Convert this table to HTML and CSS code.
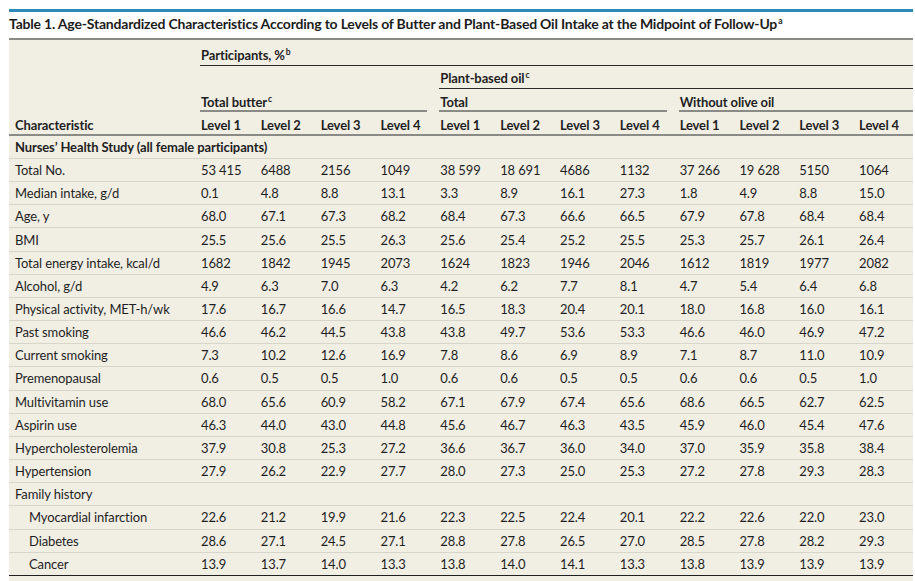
FILE: index.html
```html
<!DOCTYPE html>
<html lang="en">
<head>
<meta charset="utf-8">
<title>Table 1</title>
<link rel="stylesheet" href="styles.css">
</head>
<body>
<div class="page">
  <div class="rule"></div>
  <h1 class="title">Table 1. Age-Standardized Characteristics According to Levels of Butter and Plant-Based Oil Intake at the Midpoint of Follow-Up<sup>a</sup></h1>
  <div class="tablewrap">
    <table class="data">
      <colgroup>
        <col class="c-char">
        <col class="c-num"><col class="c-num"><col class="c-num"><col class="c-num">
        <col class="c-num"><col class="c-num"><col class="c-num"><col class="c-num">
        <col class="c-num"><col class="c-num"><col class="c-num"><col class="c-num">
      </colgroup>
      <thead>
        <tr class="h1">
          <th class="charhead" rowspan="4"><div class="charlbl">Characteristic</div></th>
          <th class="grp last" colspan="12"><div class="lbl lbl-dark"><span>Participants, %<sup>b</sup></span></div></th>
        </tr>
        <tr class="h2">
          <th class="blank" colspan="4"></th>
          <th class="grp last" colspan="8"><div class="lbl lbl-dark"><span>Plant-based oil<sup>c</sup></span></div></th>
        </tr>
        <tr class="h3">
          <th class="grp" colspan="4"><div class="lbl lbl-gray"><span>Total butter<sup>c</sup></span></div></th>
          <th class="grp" colspan="4"><div class="lbl lbl-gray"><span>Total</span></div></th>
          <th class="grp last" colspan="4"><div class="lbl lbl-gray"><span>Without olive oil</span></div></th>
        </tr>
        <tr class="h4">
          <th class="lev">Level 1</th><th class="lev">Level 2</th><th class="lev">Level 3</th><th class="lev">Level 4</th>
          <th class="lev">Level 1</th><th class="lev">Level 2</th><th class="lev">Level 3</th><th class="lev">Level 4</th>
          <th class="lev">Level 1</th><th class="lev">Level 2</th><th class="lev">Level 3</th><th class="lev">Level 4</th>
        </tr>
      </thead>
      <tbody>
        <tr class="section"><td colspan="13">Nurses’ Health Study (all female participants)</td></tr>
        <tr><td>Total No.</td><td>53&nbsp;415</td><td>6488</td><td>2156</td><td>1049</td><td>38&nbsp;599</td><td>18&nbsp;691</td><td>4686</td><td>1132</td><td>37&nbsp;266</td><td>19&nbsp;628</td><td>5150</td><td>1064</td></tr>
        <tr><td>Median intake, g/d</td><td>0.1</td><td>4.8</td><td>8.8</td><td>13.1</td><td>3.3</td><td>8.9</td><td>16.1</td><td>27.3</td><td>1.8</td><td>4.9</td><td>8.8</td><td>15.0</td></tr>
        <tr><td>Age, y</td><td>68.0</td><td>67.1</td><td>67.3</td><td>68.2</td><td>68.4</td><td>67.3</td><td>66.6</td><td>66.5</td><td>67.9</td><td>67.8</td><td>68.4</td><td>68.4</td></tr>
        <tr><td>BMI</td><td>25.5</td><td>25.6</td><td>25.5</td><td>26.3</td><td>25.6</td><td>25.4</td><td>25.2</td><td>25.5</td><td>25.3</td><td>25.7</td><td>26.1</td><td>26.4</td></tr>
        <tr><td>Total energy intake, kcal/d</td><td>1682</td><td>1842</td><td>1945</td><td>2073</td><td>1624</td><td>1823</td><td>1946</td><td>2046</td><td>1612</td><td>1819</td><td>1977</td><td>2082</td></tr>
        <tr><td>Alcohol, g/d</td><td>4.9</td><td>6.3</td><td>7.0</td><td>6.3</td><td>4.2</td><td>6.2</td><td>7.7</td><td>8.1</td><td>4.7</td><td>5.4</td><td>6.4</td><td>6.8</td></tr>
        <tr><td>Physical activity, MET-h/wk</td><td>17.6</td><td>16.7</td><td>16.6</td><td>14.7</td><td>16.5</td><td>18.3</td><td>20.4</td><td>20.1</td><td>18.0</td><td>16.8</td><td>16.0</td><td>16.1</td></tr>
        <tr><td>Past smoking</td><td>46.6</td><td>46.2</td><td>44.5</td><td>43.8</td><td>43.8</td><td>49.7</td><td>53.6</td><td>53.3</td><td>46.6</td><td>46.0</td><td>46.9</td><td>47.2</td></tr>
        <tr><td>Current smoking</td><td>7.3</td><td>10.2</td><td>12.6</td><td>16.9</td><td>7.8</td><td>8.6</td><td>6.9</td><td>8.9</td><td>7.1</td><td>8.7</td><td>11.0</td><td>10.9</td></tr>
        <tr><td>Premenopausal</td><td>0.6</td><td>0.5</td><td>0.5</td><td>1.0</td><td>0.6</td><td>0.6</td><td>0.5</td><td>0.5</td><td>0.6</td><td>0.6</td><td>0.5</td><td>1.0</td></tr>
        <tr><td>Multivitamin use</td><td>68.0</td><td>65.6</td><td>60.9</td><td>58.2</td><td>67.1</td><td>67.9</td><td>67.4</td><td>65.6</td><td>68.6</td><td>66.5</td><td>62.7</td><td>62.5</td></tr>
        <tr><td>Aspirin use</td><td>46.3</td><td>44.0</td><td>43.0</td><td>44.8</td><td>45.6</td><td>46.7</td><td>46.3</td><td>43.5</td><td>45.9</td><td>46.0</td><td>45.4</td><td>47.6</td></tr>
        <tr><td>Hypercholesterolemia</td><td>37.9</td><td>30.8</td><td>25.3</td><td>27.2</td><td>36.6</td><td>36.7</td><td>36.0</td><td>34.0</td><td>37.0</td><td>35.9</td><td>35.8</td><td>38.4</td></tr>
        <tr><td>Hypertension</td><td>27.9</td><td>26.2</td><td>22.9</td><td>27.7</td><td>28.0</td><td>27.3</td><td>25.0</td><td>25.3</td><td>27.2</td><td>27.8</td><td>29.3</td><td>28.3</td></tr>
        <tr><td colspan="13">Family history</td></tr>
        <tr class="sub"><td>Myocardial infarction</td><td>22.6</td><td>21.2</td><td>19.9</td><td>21.6</td><td>22.3</td><td>22.5</td><td>22.4</td><td>20.1</td><td>22.2</td><td>22.6</td><td>22.0</td><td>23.0</td></tr>
        <tr class="sub"><td>Diabetes</td><td>28.6</td><td>27.1</td><td>24.5</td><td>27.1</td><td>28.8</td><td>27.8</td><td>26.5</td><td>27.0</td><td>28.5</td><td>27.8</td><td>28.2</td><td>29.3</td></tr>
        <tr class="sub lastrow"><td>Cancer</td><td>13.9</td><td>13.7</td><td>14.0</td><td>13.3</td><td>13.8</td><td>14.0</td><td>14.1</td><td>13.3</td><td>13.8</td><td>13.9</td><td>13.9</td><td>13.9</td></tr>
      </tbody>
    </table>
  </div>
</div>
</body>
</html>
```

FILE: styles.css
```css
html, body {
  margin: 0;
  padding: 0;
  background: #ffffff;
}

.page {
  padding: 9px 2px 0 9px;
  width: 904px;
  font-family: "Lato", "Open Sans", sans-serif;
  color: #1f1f1f;
}

.rule {
  height: 3px;
  background: #2c8bb9;
}

.title {
  margin: 0 0 2px 0;
  font-size: 14px;
  line-height: 24px;
  font-weight: 700;
  letter-spacing: -0.2px;
  color: #1c1c1c;
  white-space: nowrap;
}

sup {
  font-size: 8.5px;
  line-height: 0;
  vertical-align: 5px;
  font-weight: 700;
  margin-left: 1px;
  letter-spacing: 0;
}

.tablewrap {
  background: #f1eee4;
  border-top: 2px solid #8a8a86;
  padding-bottom: 6px;
}

.data {
  width: 904px;
  table-layout: fixed;
  border-collapse: separate;
  border-spacing: 0;
  font-size: 13px;
  letter-spacing: -0.12px;
}

.c-char { width: 186px; }
.c-num { width: 59.83px; }

.data th {
  padding: 0;
  text-align: left;
  font-weight: 700;
  vertical-align: bottom;
  line-height: 16px;
}

.charhead {
  border-bottom: 2px solid #8a8a86;
}

.charlbl {
  padding: 0 0 1px 6px;
}

.grp {
  padding: 0 7px 0 5px !important;
}

.grp.last {
  padding-right: 0 !important;
}

.lbl {
  box-sizing: border-box;
  display: flex;
  align-items: flex-end;
  padding-left: 1px;
}

.lbl-dark {
  border-bottom: 1px solid #2a2a2a;
}

.lbl-gray {
  border-bottom: 2px solid #8a8a86;
}

.h1 .lbl { height: 26px; padding-bottom: 2px; }
.h2 .lbl { height: 23px; padding-bottom: 2px; }
.h2 .blank { height: 23px; }
.h3 .lbl { height: 23px; padding-bottom: 0; }

.lev {
  box-sizing: border-box;
  height: 24px;
  padding: 0 0 1px 6px !important;
  border-bottom: 2px solid #8a8a86;
  white-space: nowrap;
}

.data td {
  box-sizing: border-box;
  height: 23.17px;
  padding: 0 0 0 6px;
  border-bottom: 1px solid #d8d5cb;
  line-height: 16px;
  vertical-align: middle;
  white-space: nowrap;
}

.section td {
  font-weight: 700;
  height: 23px;
}

.sub td:first-child {
  padding-left: 20px;
}

.lastrow td {
  border-bottom: 1px solid #1f1f1f;
}
```
